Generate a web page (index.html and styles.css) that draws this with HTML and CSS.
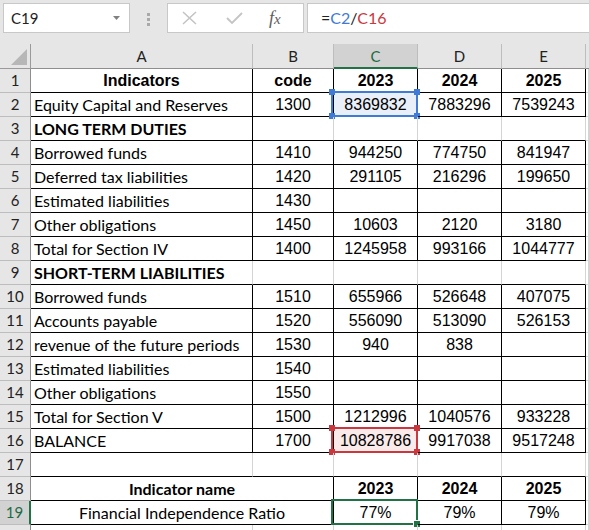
FILE: index.html
```html
<!DOCTYPE html>
<html lang="en">
  <head>
    <meta charset="utf-8">
    <title>Balance sheet</title>
    <link rel="stylesheet" href="styles.css">
  </head>
  <body>
    <div class="app">
      <div class="fbar">
        <div class="namebox">
          <span>C19</span>
          <svg width="7" height="4" viewBox="0 0 7 4"><polygon points="0,0 7,0 3.5,4" fill="#808080"/></svg>
        </div>
        <div class="grip"><i></i><i></i><i></i></div>
        <div class="fbtns">
          <svg class="ico-x" width="15" height="14" viewBox="0 0 15 14"><path d="M1 1 L14 13 M14 1 L1 13" stroke="#c4c4c4" stroke-width="1.6" fill="none"/></svg>
          <svg class="ico-ok" width="17" height="12" viewBox="0 0 17 12"><path d="M1 6 L6 11 L16 1" stroke="#c4c4c4" stroke-width="1.8" fill="none"/></svg>
          <span class="fx">f<small>x</small></span>
        </div>
        <div class="finput">=<span class="ref-a">C2</span>/<span class="ref-b">C16</span></div>
      </div>

      <div class="sheet">
        <!-- column headers -->
        <div class="corner"><svg width="30" height="24" viewBox="0 0 30 24"><polygon points="27,5 27,21 11,21" fill="#b7b7b7"/></svg></div>
        <div class="ch">A</div>
        <div class="ch">B</div>
        <div class="ch on">C</div>
        <div class="ch">D</div>
        <div class="ch">E</div>
        <div class="ch last"></div>

        <div class="rh">1</div>
        <div class="c hd">Indicators</div>
        <div class="c hd">code</div>
        <div class="c hd">2023</div>
        <div class="c hd">2024</div>
        <div class="c hd">2025</div>
        <div class="c x"></div>

        <div class="rh">2</div>
        <div class="c t">Equity Capital and Reserves</div>
        <div class="c n">1300</div>
        <div class="c n fill-blue">8369832<span class="mark blue"><i class="tl"></i><i class="tr"></i><i class="bl"></i><i class="br"></i></span></div>
        <div class="c n">7883296</div>
        <div class="c n">7539243</div>
        <div class="c x"></div>

        <div class="rh">3</div>
        <div class="c t b">LONG TERM DUTIES</div>
        <div class="c g"></div>
        <div class="c g"></div>
        <div class="c g"></div>
        <div class="c g"></div>
        <div class="c x"></div>

        <div class="rh">4</div>
        <div class="c t">Borrowed funds</div>
        <div class="c n">1410</div>
        <div class="c n">944250</div>
        <div class="c n">774750</div>
        <div class="c n">841947</div>
        <div class="c x"></div>

        <div class="rh">5</div>
        <div class="c t">Deferred tax liabilities</div>
        <div class="c n">1420</div>
        <div class="c n">291105</div>
        <div class="c n">216296</div>
        <div class="c n">199650</div>
        <div class="c x"></div>

        <div class="rh">6</div>
        <div class="c t">Estimated liabilities</div>
        <div class="c n">1430</div>
        <div class="c n"></div>
        <div class="c n"></div>
        <div class="c n"></div>
        <div class="c x"></div>

        <div class="rh">7</div>
        <div class="c t">Other obligations</div>
        <div class="c n">1450</div>
        <div class="c n">10603</div>
        <div class="c n">2120</div>
        <div class="c n">3180</div>
        <div class="c x"></div>

        <div class="rh">8</div>
        <div class="c t">Total for Section IV</div>
        <div class="c n">1400</div>
        <div class="c n">1245958</div>
        <div class="c n">993166</div>
        <div class="c n">1044777</div>
        <div class="c x"></div>

        <div class="rh">9</div>
        <div class="c t b g">SHORT-TERM LIABILITIES</div>
        <div class="c g"></div>
        <div class="c g"></div>
        <div class="c g"></div>
        <div class="c g"></div>
        <div class="c x"></div>

        <div class="rh">10</div>
        <div class="c t">Borrowed funds</div>
        <div class="c n">1510</div>
        <div class="c n">655966</div>
        <div class="c n">526648</div>
        <div class="c n">407075</div>
        <div class="c x"></div>

        <div class="rh">11</div>
        <div class="c t">Accounts payable</div>
        <div class="c n">1520</div>
        <div class="c n">556090</div>
        <div class="c n">513090</div>
        <div class="c n">526153</div>
        <div class="c x"></div>

        <div class="rh">12</div>
        <div class="c t">revenue of the future periods</div>
        <div class="c n">1530</div>
        <div class="c n">940</div>
        <div class="c n">838</div>
        <div class="c n"></div>
        <div class="c x"></div>

        <div class="rh">13</div>
        <div class="c t">Estimated liabilities</div>
        <div class="c n">1540</div>
        <div class="c n"></div>
        <div class="c n"></div>
        <div class="c n"></div>
        <div class="c x"></div>

        <div class="rh">14</div>
        <div class="c t">Other obligations</div>
        <div class="c n">1550</div>
        <div class="c n"></div>
        <div class="c n"></div>
        <div class="c n"></div>
        <div class="c x"></div>

        <div class="rh">15</div>
        <div class="c t">Total for Section V</div>
        <div class="c n">1500</div>
        <div class="c n">1212996</div>
        <div class="c n">1040576</div>
        <div class="c n">933228</div>
        <div class="c x"></div>

        <div class="rh">16</div>
        <div class="c t">BALANCE</div>
        <div class="c n">1700</div>
        <div class="c n fill-red">10828786<span class="mark red"><i class="tl"></i><i class="tr"></i><i class="bl"></i><i class="br"></i></span></div>
        <div class="c n">9917038</div>
        <div class="c n">9517248</div>
        <div class="c x"></div>

        <div class="rh">17</div>
        <div class="c g"></div>
        <div class="c g"></div>
        <div class="c g"></div>
        <div class="c g"></div>
        <div class="c g"></div>
        <div class="c x"></div>

        <div class="rh">18</div>
        <div class="c t-c b span2">Indicator name</div>
        <div class="c hd">2023</div>
        <div class="c hd">2024</div>
        <div class="c hd">2025</div>
        <div class="c x"></div>

        <div class="rh on">19</div>
        <div class="c t-c span2">Financial Independence Ratio</div>
        <div class="c n">77%<span class="mark green"><i class="handle"></i></span></div>
        <div class="c n">79%</div>
        <div class="c n">79%</div>
        <div class="c x"></div>

        <div class="rh"></div>
        <div class="c x"></div>
        <div class="c x"></div>
        <div class="c x"></div>
        <div class="c x"></div>
        <div class="c x"></div>
        <div class="c x"></div>
      </div>
    </div>
  </body>
</html>
```

FILE: styles.css
```css
* { box-sizing: border-box; }
body { margin: 0; background: #fff; font-family: "Liberation Sans", Arial, sans-serif; }
.app { width: 589px; height: 530px; overflow: hidden; }

/* formula bar */
.fbar { height: 44px; background: #e6e6e6; display: flex; padding: 3px 0 0 3px; }
.namebox { width: 127px; height: 30px; background: #fff; border: 1px solid #c8c8c8; display: flex; align-items: center; justify-content: space-between; padding: 0 9px 0 7px; font: 15px Lato, sans-serif; color: #222; }
.grip { width: 37px; display: flex; flex-direction: column; align-items: center; gap: 2px; padding-top: 10px; }
.grip i { width: 3px; height: 3px; background: #a9a9a9; }
.fbtns { width: 137px; height: 30px; background: #fff; border: 1px solid #c8c8c8; display: flex; align-items: center; padding-left: 14px; }
.ico-ok { margin-left: 29px; }
.fx { margin-left: 26px; font: italic 18px "Liberation Serif", serif; color: #5e5e5e; }
.fx small { font-size: 15px; }
.finput { flex: 1; margin-left: 3px; height: 30px; background: #fff; border: 1px solid #c8c8c8; border-right: 0; padding-left: 13px; font: 16px Lato, sans-serif; line-height: 28px; color: #222; }
.ref-a { color: #3f7bd6; }
.ref-b { color: #c9383e; }

/* grid */
.sheet { display: grid; grid-template-columns: 31px 222px 81px 84px 84px 84px 1fr; grid-template-rows: 25px repeat(20, 24px); }
.corner, .ch, .rh { background: #e6e6e6; font: 15px Lato, sans-serif; color: #222; text-align: center; }
.corner { border-right: 1px solid #9a9a9a; border-bottom: 1px solid #9a9a9a; }
.corner svg { display: block; }
.ch { border-right: 1px solid #bdbdbd; border-bottom: 1px solid #8e8e8e; line-height: 24px; }
.ch.on { background: #d2d2d2; color: #1e6b42; border-bottom: 2px solid #217346; }
.ch.last { border-right: 0; }
.rh { border-right: 1px solid #8e8e8e; border-bottom: 1px solid #bdbdbd; line-height: 23px; }
.rh.on { background: #d2d2d2; color: #1e6b42; border-right: 2px solid #217346; }

.c { position: relative; border-right: 1px solid #000; border-bottom: 1px solid #000; line-height: 23px; white-space: nowrap; font-size: 16px; color: #000; }
.c.g { border-right-color: #d4d4d4; }
.c.x { border-right-color: #d4d4d4; border-bottom-color: #d4d4d4; }
.t { font-family: Lato, sans-serif; padding-left: 3px; }
.t-c { font-family: Lato, sans-serif; text-align: center; }
.b { font-weight: bold; }
.n { text-align: center; }
.hd { text-align: center; font-weight: bold; }
.span2 { grid-column: span 2; }
.fill-blue { background: #e9eff9; }
.fill-red { background: #fbeaea; }

/* selection marks */
.mark { position: absolute; left: -3px; top: -2px; right: -1px; bottom: -1px; border: 2px solid; }
.mark.blue { border-color: #3f7bd6; }
.mark.red { border-color: #c9383e; }
.mark.green { border-color: #217346; }
.mark i { position: absolute; width: 6px; height: 6px; }
.mark.blue i { background: #3f7bd6; }
.mark.red i { background: #c9383e; }
.mark .tl { left: -4px; top: -4px; }
.mark .tr { right: -4px; top: -4px; }
.mark .bl { left: -4px; bottom: -4px; }
.mark .br { right: -4px; bottom: -4px; }
.mark .handle { right: -4px; bottom: -4px; background: #217346; border-left: 1px solid #fff; border-top: 1px solid #fff; width: 7px; height: 7px; }
```
